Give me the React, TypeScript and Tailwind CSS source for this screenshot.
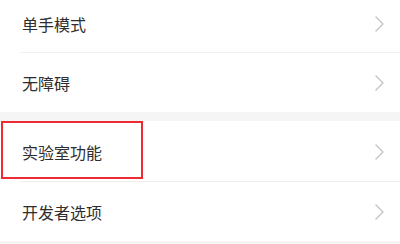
import React from "react";

function Chevron() {
  return (
    <svg width="9" height="16" viewBox="0 0 9 16" fill="none" className="shrink-0">
      <path d="M1 1L8 8L1 15" stroke="#c4c4c4" strokeWidth="1.4" strokeLinecap="round" strokeLinejoin="round" />
    </svg>
  );
}

function Row({ label, className }: { label: string; className: string }) {
  return (
    <div className={`flex items-center justify-between pl-[22px] pr-[16px] ${className}`}>
      <span className="text-[16px] text-[#2e2e2e]">{label}</span>
      <Chevron />
    </div>
  );
}

export default function App() {
  return (
    <div
      className="relative h-[244px] w-[400px] overflow-hidden bg-white"
      style={{ fontFamily: '"Noto Sans CJK SC", "Noto Sans", sans-serif' }}
    >
      <div className="flex flex-col">
        <Row label="单手模式" className="h-[52px] pb-[5px]" />
        <div className="ml-5 h-px bg-[#f0f0f0]" />
        <Row label="无障碍" className="h-[59px]" />
        <div className="h-[9px] bg-[#f5f5f5]" />
        <Row label="实验室功能" className="h-[60px] pt-[2px]" />
        <div className="ml-5 h-px bg-[#f0f0f0]" />
        <Row label="开发者选项" className="h-[59px] pt-[1px]" />
        <div className="h-[4px] bg-[#f5f5f5]" />
      </div>
      {/* highlight box */}
      <div className="absolute left-[1px] top-[121px] h-[58px] w-[142px] border-2 border-[#ee2a33]" />
    </div>
  );
}
